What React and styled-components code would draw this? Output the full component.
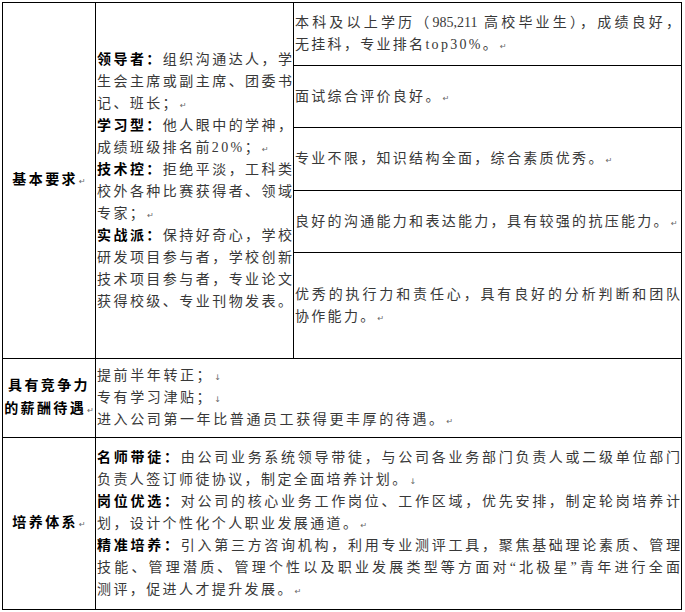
import React from 'react'
import styled, {createGlobalStyle} from 'styled-components'

const GlobalStyle = createGlobalStyle`
  html, body {
    margin: 0;
    background: #fff;
  }
  body {
    font-family: 'Liberation Serif', 'Noto Sans CJK SC', serif;
  }
`

const Page = styled.div`
  padding: 2px 0 0 2px;
`

const Sheet = styled.div`
  display: grid;
  grid-template-columns: 93px 198px 388px;
  grid-template-rows: 63px 62px 63px 62px 106px 79px 172px;
  width: max-content;
  border-top: 1px solid #000;
  border-left: 1px solid #000;
  font-size: 14px;
  color: #383838;
`

const Cell = styled.div`
  grid-column: ${props => props.col};
  grid-row: ${props => props.row};
  border-right: 1px solid #000;
  border-bottom: 1px solid #000;
  display: flex;
  flex-direction: column;
  justify-content: center;
  align-items: ${props => props.center ? 'center' : 'stretch'};
  padding: 0 1px;
  min-width: 0;
`

const Heading = styled.div`
  font-weight: 700;
  color: #000;
  letter-spacing: 2.4px;
  line-height: 23px;
  text-align: center;
  white-space: nowrap;
`

const Line = styled.div`
  height: 22px;
  line-height: 22px;
  letter-spacing: ${props => props.full ? 0 : props.spacing || 2.4}px;
  text-align: ${props => props.full ? 'justify' : 'left'};
  text-align-last: ${props => props.full ? 'justify' : 'left'};
  white-space: ${props => props.full ? 'normal' : 'nowrap'};
`

const Label = styled.b`
  font-weight: 700;
  color: #000;
`

const Mark = styled.span`
  font-family: 'DejaVu Sans', sans-serif;
  font-size: 8px;
  font-weight: 400;
  color: #666;
  letter-spacing: 0;
  margin-left: 1px;
`

// each line: [label, text, full, mark]
const profileLines = [
  ['领导者：', '组织沟通达人，学', true],
  [null, '生会主席或副主席、团委书', true],
  [null, '记、班长；', false, '↵'],
  ['学习型：', '他人眼中的学神，', true],
  [null, '成绩班级排名前20%；', false, '↵'],
  ['技术控：', '拒绝平淡，工科类', true],
  [null, '校外各种比赛获得者、领域', true],
  [null, '专家；', false, '↵'],
  ['实战派：', '保持好奇心，学校', true],
  [null, '研发项目参与者，学校创新', true],
  [null, '技术项目参与者，专业论文', true],
  [null, '获得校级、专业刊物发表。', true],
]

const requirements = [
  [[null, '本科及以上学历（985,211 高校毕业生），成绩良好，', true], [null, '无挂科，专业排名top30%。', false, '↵']],
  [[null, '面试综合评价良好。', false, '↵']],
  [[null, '专业不限，知识结构全面，综合素质优秀。', false, '↵']],
  [[null, '良好的沟通能力和表达能力，具有较强的抗压能力。', false, '↵']],
  [[null, '优秀的执行力和责任心，具有良好的分析判断和团队', true], [null, '协作能力。', false, '↵']],
]

const payLines = [
  [null, '提前半年转正；', false, '↓'],
  [null, '专有学习津贴；', false, '↓'],
  [null, '进入公司第一年比普通员工获得更丰厚的待遇。', false, '↵'],
]

const trainingLines = [
  ['名师带徒：', '由公司业务系统领导带徒，与公司各业务部门负责人或二级单位部门', true],
  [null, '负责人签订师徒协议，制定全面培养计划。', false, '↓'],
  ['岗位优选：', '对公司的核心业务工作岗位、工作区域，优先安排，制定轮岗培养计', true],
  [null, '划，设计个性化个人职业发展通道。', false, '↵'],
  ['精准培养：', '引入第三方咨询机构，利用专业测评工具，聚焦基础理论素质、管理', true],
  [null, '技能、管理潜质、管理个性以及职业发展类型等方面对“北极星”青年进行全面', true],
  [null, '测评，促进人才提升发展。', false, '↵'],
]

const Lines = ({lines, spacing}) => lines.map(([label, text, full, mark], i) => (
  <Line key={i} full={full} spacing={spacing}>
    {label && <Label>{label}</Label>}
    {text}
    {mark && <Mark>{mark}</Mark>}
  </Line>
))

const App = () => (
  <Page lang="zh-CN">
    <GlobalStyle />
    <Sheet>
      <Cell col="1" row="1 / span 5" center>
        <Heading>基本要求<Mark>↵</Mark></Heading>
      </Cell>
      <Cell col="2" row="1 / span 5">
        <Lines lines={profileLines} />
      </Cell>
      {requirements.map((lines, i) => (
        <Cell key={i} col="3" row={`${i + 1}`}>
          <Lines lines={lines} spacing={2.3} />
        </Cell>
      ))}

      <Cell col="1" row="6" center>
        <Heading>具有竞争力</Heading>
        <Heading>的薪酬待遇<Mark>↵</Mark></Heading>
      </Cell>
      <Cell col="2 / span 2" row="6">
        <Lines lines={payLines} spacing={2.6} />
      </Cell>

      <Cell col="1" row="7" center>
        <Heading>培养体系<Mark>↵</Mark></Heading>
      </Cell>
      <Cell col="2 / span 2" row="7">
        <Lines lines={trainingLines} />
      </Cell>
    </Sheet>
  </Page>
)

export default App
